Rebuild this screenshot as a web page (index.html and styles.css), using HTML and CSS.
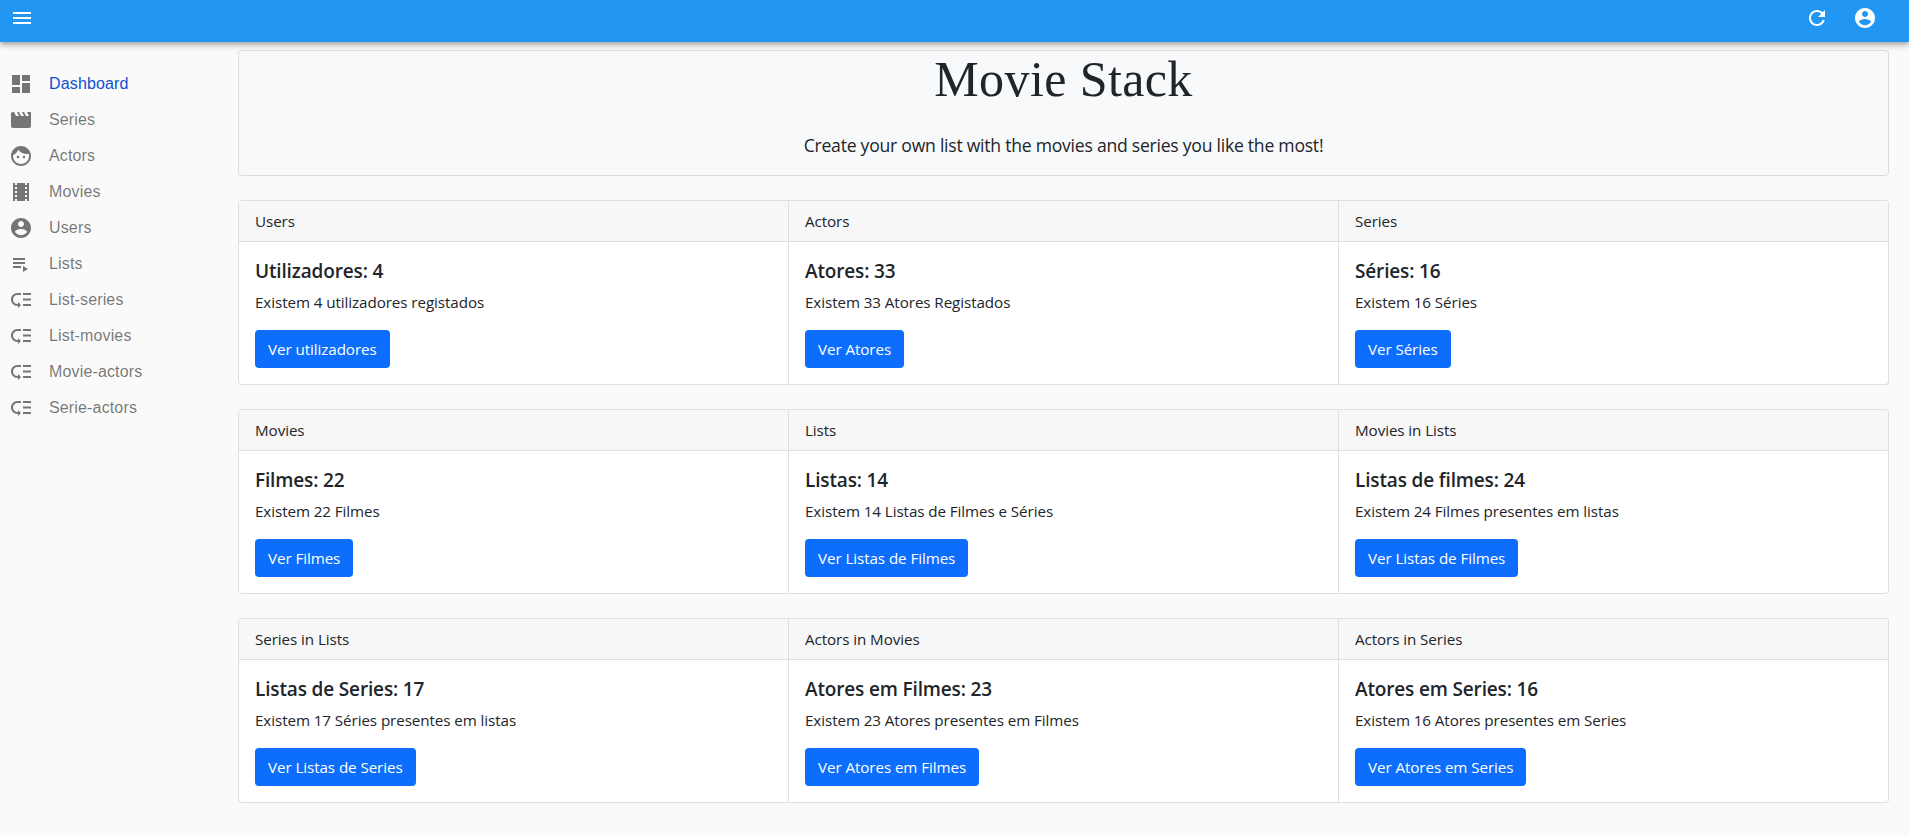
FILE: index.html
```html
<!DOCTYPE html>
<html lang="en">
<head>
<meta charset="utf-8">
<title>Movie Stack</title>
<link rel="stylesheet" href="styles.css">
</head>
<body>
<svg class="sprite" width="0" height="0" aria-hidden="true">
  <symbol id="menu" viewBox="0 0 24 24"><path d="M3 18h18v-2H3v2zm0-5h18v-2H3v2zm0-7v2h18V6H3z"/></symbol>
  <symbol id="refresh" viewBox="0 0 24 24"><path d="M17.65 6.35C16.2 4.9 14.21 4 12 4c-4.42 0-7.99 3.58-7.99 8s3.57 8 7.99 8c3.73 0 6.84-2.55 7.73-6h-2.08c-.82 2.33-3.04 4-5.65 4-3.31 0-6-2.69-6-6s2.69-6 6-6c1.66 0 3.14.69 4.22 1.78L13 11h7V4l-2.35 2.35z"/></symbol>
  <symbol id="account" viewBox="0 0 24 24"><path d="M12 2C6.48 2 2 6.48 2 12s4.48 10 10 10 10-4.48 10-10S17.52 2 12 2zm0 3c1.66 0 3 1.34 3 3s-1.34 3-3 3-3-1.34-3-3 1.34-3 3-3zm0 14.2c-2.5 0-4.71-1.28-6-3.22.03-1.99 4-3.08 6-3.08 1.99 0 5.97 1.09 6 3.08-1.29 1.94-3.5 3.22-6 3.22z"/></symbol>
  <symbol id="dashboard" viewBox="0 0 24 24"><path d="M3 13h8V3H3v10zm0 8h8v-6H3v6zm10 0h8V11h-8v10zm0-18v6h8V3h-8z"/></symbol>
  <symbol id="movie" viewBox="0 0 24 24"><path d="M18 4l2 4h-3l-2-4h-2l2 4h-3l-2-4H8l2 4H7L5 4H4c-1.1 0-1.99.9-1.99 2L2 18c0 1.1.9 2 2 2h16c1.1 0 2-.9 2-2V4h-4z"/></symbol>
  <symbol id="face" viewBox="0 0 24 24"><path d="M9 11.75c-.69 0-1.25.56-1.25 1.25s.56 1.25 1.25 1.25 1.25-.56 1.25-1.25-.56-1.25-1.25-1.25zm6 0c-.69 0-1.25.56-1.25 1.25s.56 1.25 1.25 1.25 1.25-.56 1.25-1.25-.56-1.25-1.25-1.25zM12 2C6.48 2 2 6.48 2 12s4.48 10 10 10 10-4.48 10-10S17.52 2 12 2zm0 18c-4.41 0-8-3.59-8-8 0-.29.02-.58.05-.86 2.36-1.05 4.23-2.98 5.21-5.37C11.07 8.33 14.05 10 17.42 10c.78 0 1.53-.09 2.25-.26.21.71.33 1.47.33 2.26 0 4.41-3.59 8-8 8z"/></symbol>
  <symbol id="theaters" viewBox="0 0 24 24"><path d="M18 3v2h-2V3H8v2H6V3H4v18h2v-2h2v2h8v-2h2v2h2V3h-2zM8 17H6v-2h2v2zm0-4H6v-2h2v2zm0-4H6V7h2v2zm10 8h-2v-2h2v2zm0-4h-2v-2h2v2zm0-4h-2V7h2v2z"/></symbol>
  <symbol id="playlist" viewBox="0 0 24 24"><path d="M4 10h12v2H4zm0-4h12v2H4zm0 8h8v2H4zm10 0v6l5-3z"/></symbol>
  <symbol id="priority" viewBox="0 0 24 24"><path d="M14 5h8v2h-8zm0 5.5h8v2h-8zm0 5.5h8v2h-8zM2 11.5C2 15.08 4.92 18 8.5 18H9v2l3-3-3-3v2h-.5C6.02 16 4 13.98 4 11.5S6.02 7 8.5 7H12V5H8.5C4.92 5 2 7.92 2 11.5z"/></symbol>
</svg>
<header class="appbar">
  <svg class="icon"><use href="#menu"/></svg>
  <div class="actions">
    <svg class="icon"><use href="#refresh"/></svg>
    <svg class="icon"><use href="#account"/></svg>
  </div>
</header>
<div class="layout">
  <nav class="sidebar">
    <a class="item active"><svg class="icon"><use href="#dashboard"/></svg>Dashboard</a>
    <a class="item"><svg class="icon"><use href="#movie"/></svg>Series</a>
    <a class="item"><svg class="icon"><use href="#face"/></svg>Actors</a>
    <a class="item"><svg class="icon"><use href="#theaters"/></svg>Movies</a>
    <a class="item"><svg class="icon"><use href="#account"/></svg>Users</a>
    <a class="item"><svg class="icon"><use href="#playlist"/></svg>Lists</a>
    <a class="item"><svg class="icon"><use href="#priority"/></svg>List-series</a>
    <a class="item"><svg class="icon"><use href="#priority"/></svg>List-movies</a>
    <a class="item"><svg class="icon"><use href="#priority"/></svg>Movie-actors</a>
    <a class="item"><svg class="icon"><use href="#priority"/></svg>Serie-actors</a>
  </nav>
  <main class="content">
    <section class="hero">
      <h1 class="hero-title">Movie Stack</h1>
      <p class="hero-text">Create your own list with the movies and series you like the most!</p>
    </section>
    <section class="card-group">
      <article class="card"><div class="card-header">Users</div><div class="card-body"><h5 class="card-title">Utilizadores: 4</h5><p class="card-text">Existem 4 utilizadores registados</p><a class="btn">Ver utilizadores</a></div></article>
      <article class="card"><div class="card-header">Actors</div><div class="card-body"><h5 class="card-title">Atores: 33</h5><p class="card-text">Existem 33 Atores Registados</p><a class="btn">Ver Atores</a></div></article>
      <article class="card"><div class="card-header">Series</div><div class="card-body"><h5 class="card-title">Séries: 16</h5><p class="card-text">Existem 16 Séries</p><a class="btn">Ver Séries</a></div></article>
    </section>
    <section class="card-group">
      <article class="card"><div class="card-header">Movies</div><div class="card-body"><h5 class="card-title">Filmes: 22</h5><p class="card-text">Existem 22 Filmes</p><a class="btn">Ver Filmes</a></div></article>
      <article class="card"><div class="card-header">Lists</div><div class="card-body"><h5 class="card-title">Listas: 14</h5><p class="card-text">Existem 14 Listas de Filmes e Séries</p><a class="btn">Ver Listas de Filmes</a></div></article>
      <article class="card"><div class="card-header">Movies in Lists</div><div class="card-body"><h5 class="card-title">Listas de filmes: 24</h5><p class="card-text">Existem 24 Filmes presentes em listas</p><a class="btn">Ver Listas de Filmes</a></div></article>
    </section>
    <section class="card-group">
      <article class="card"><div class="card-header">Series in Lists</div><div class="card-body"><h5 class="card-title">Listas de Series: 17</h5><p class="card-text">Existem 17 Séries presentes em listas</p><a class="btn">Ver Listas de Series</a></div></article>
      <article class="card"><div class="card-header">Actors in Movies</div><div class="card-body"><h5 class="card-title">Atores em Filmes: 23</h5><p class="card-text">Existem 23 Atores presentes em Filmes</p><a class="btn">Ver Atores em Filmes</a></div></article>
      <article class="card"><div class="card-header">Actors in Series</div><div class="card-body"><h5 class="card-title">Atores em Series: 16</h5><p class="card-text">Existem 16 Atores presentes em Series</p><a class="btn">Ver Atores em Series</a></div></article>
    </section>
  </main>
</div>
</body>
</html>
```
FILE: styles.css
```css
* { box-sizing: border-box; }
html, body { height: 100%; overflow: hidden; }
body {
  margin: 0;
  display: flex;
  flex-direction: column;
  background: #fafafa;
  color: #212529;
  font: 15.2px/24px "Open Sans", "Noto Sans", sans-serif;
  letter-spacing: -.08px;
}
.sprite { display: none; }
.icon { width: 24px; height: 24px; fill: currentColor; flex: none; }
.appbar {
  flex: none;
  display: flex;
  justify-content: space-between;
  height: 42px;
  padding: 6px 32px 0 10px;
  color: #fff;
  background: #2196f3;
  box-shadow: 0 2px 4px -1px rgba(0,0,0,.2), 0 4px 5px 0 rgba(0,0,0,.14), 0 1px 10px 0 rgba(0,0,0,.12);
}
.actions { display: flex; gap: 24px; }
.layout { flex: 1; display: flex; padding-top: 8px; }
.sidebar { flex: none; width: 238px; padding-top: 16px; }
.item {
  display: flex;
  align-items: center;
  gap: 16px;
  height: 36px;
  padding-left: 9px;
  color: rgba(0,0,0,.54);
  font: 16px/24px "Liberation Sans", Arial, sans-serif;
  letter-spacing: .15px;
}
.item.active { color: #0d4fd0; }
.item .icon { color: #757575; }
.content { flex: 1; padding-right: 20px; }
.hero {
  height: 126px;
  border: 1px solid #d9dbdd;
  border-radius: 4px;
  background: #f8f9fb;
  text-align: center;
}
.hero-title {
  margin: 0 0 24px;
  font: 400 50px/57px "Liberation Serif", serif;
  letter-spacing: .4px;
}
.hero-text { margin: 0; font-size: 17.6px; line-height: 26px; letter-spacing: -.25px; }
.card-group { display: flex; margin-top: 24px; }
.card { flex: 1 0 0%; min-width: 0; border: 1px solid #dfdfdf; background: #fff; overflow: hidden; }
.card + .card { border-left: 0; }
.card:first-child { border-radius: 4px 0 0 4px; }
.card:last-child { border-radius: 0 4px 4px 0; }
.card-header { padding: 8px 16px; border-bottom: 1px solid #dfdfdf; background: #f7f7f7; }
.card-body { padding: 16px; }
.card-title { margin: 0 0 8px; padding-top: 2px; font-size: 19px; font-weight: 600; line-height: 22px; letter-spacing: -.15px; }
.card-text { margin: 0 0 16px; }
.btn {
  display: block;
  width: fit-content;
  padding: 7px 13px;
  border-radius: 4px;
  background: #0d6efd;
  color: #fff;
}
```
